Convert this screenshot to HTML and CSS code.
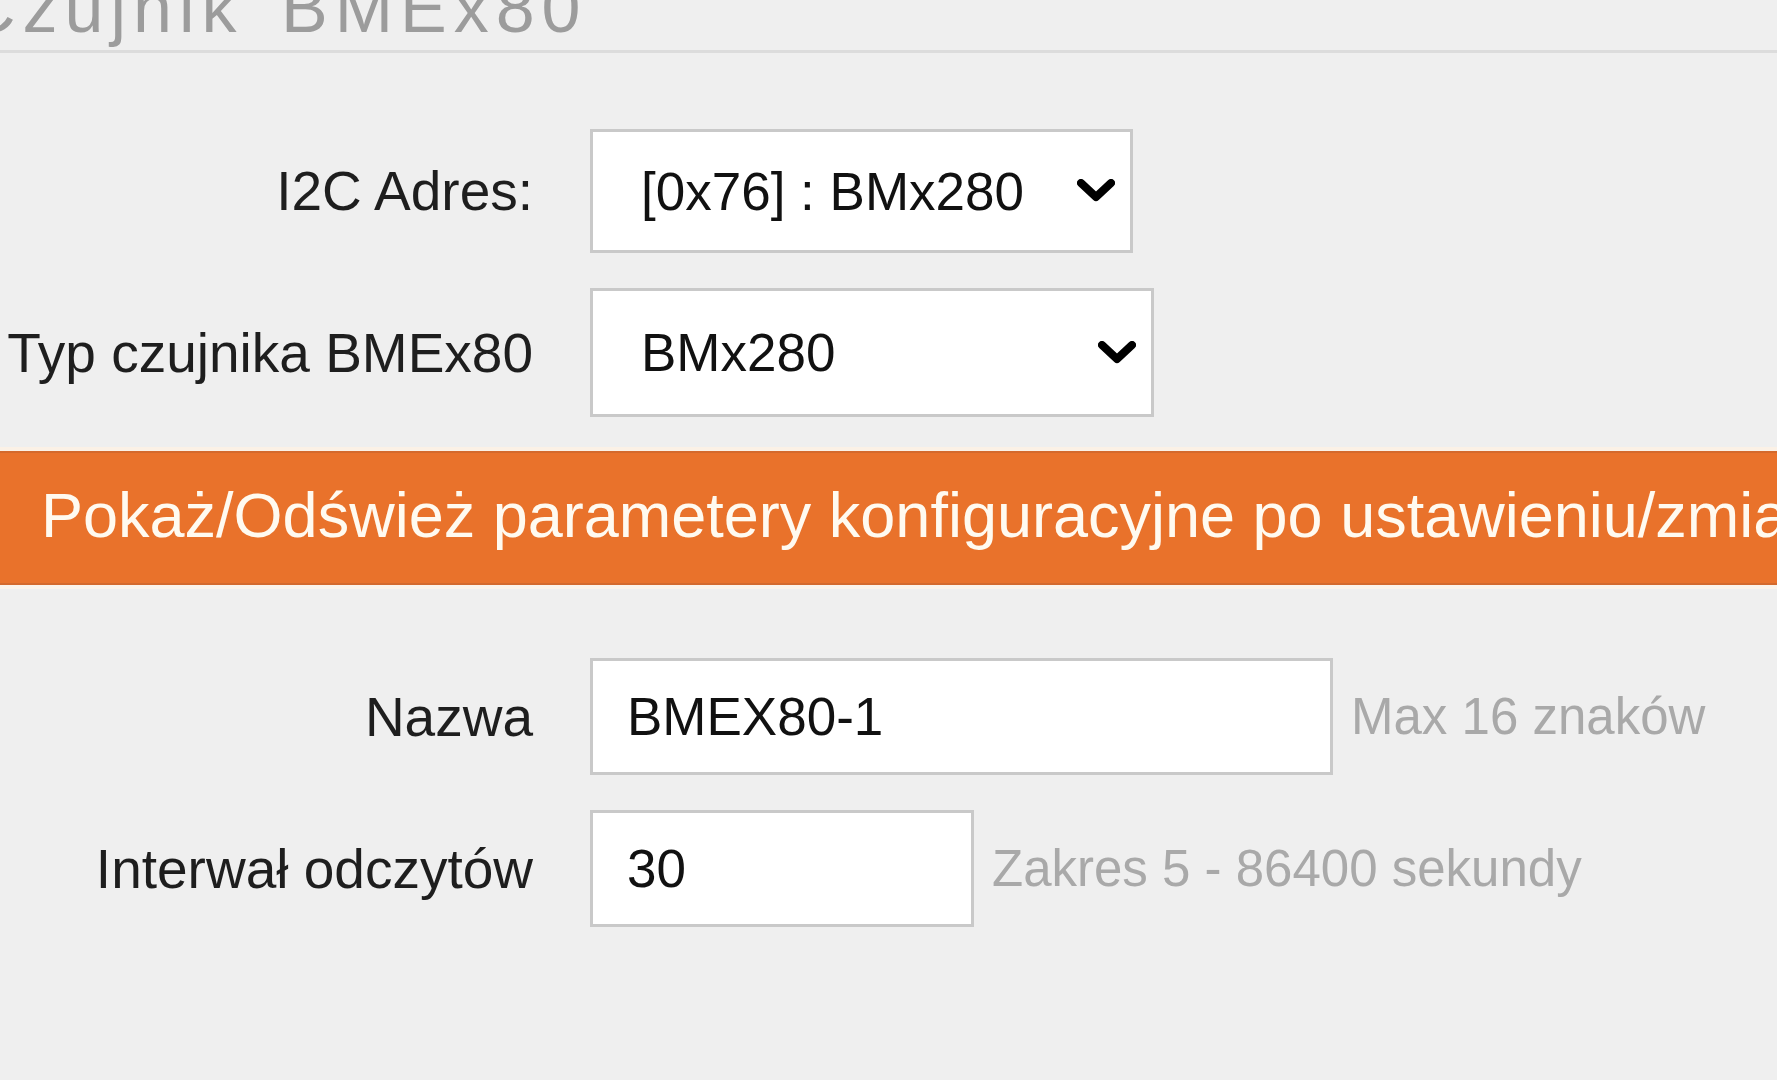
FILE: index.html
```html
<!DOCTYPE html>
<html lang="pl">
<head>
<meta charset="utf-8">
<title>Czujnik BMEx80</title>
<link rel="stylesheet" href="styles.css">
</head>
<body>
<div class="page">
  <h2 class="title"><span class="title-text">Czujnik BMEx80</span></h2>

  <div class="row row-addr">
    <label class="lbl">I2C Adres:</label>
    <div class="select select-addr">
      <span class="sel-value">[0x76] : BMx280</span>
      <svg class="chev" width="38" height="24" viewBox="0 0 38 24"><polyline points="4,4 19,18 34,4" fill="none" stroke="#000" stroke-width="8" stroke-linejoin="round" stroke-linecap="round"/></svg>
    </div>
  </div>

  <div class="row row-type">
    <label class="lbl">Typ czujnika BMEx80</label>
    <div class="select select-type">
      <span class="sel-value">BMx280</span>
      <svg class="chev" width="38" height="24" viewBox="0 0 38 24"><polyline points="4,4 19,18 34,4" fill="none" stroke="#000" stroke-width="8" stroke-linejoin="round" stroke-linecap="round"/></svg>
    </div>
  </div>

  <div class="banner">Pokaż/Odśwież parametery konfiguracyjne po ustawieniu/zmianie typu czujnika</div>

  <div class="row row-name">
    <label class="lbl">Nazwa</label>
    <div class="input input-name">BMEX80-1</div>
    <span class="hint">Max 16 znaków</span>
  </div>

  <div class="row row-int">
    <label class="lbl">Interwał odczytów</label>
    <div class="input input-int">30</div>
    <span class="hint">Zakres 5 - 86400 sekundy</span>
  </div>
</div>
</body>
</html>
```

FILE: styles.css
```css
html, body {
  margin: 0;
  padding: 0;
  background: #efefef;
  overflow: hidden;
  width: 1777px;
  height: 1080px;
}

.page {
  font-family: "Liberation Sans", Arial, sans-serif;
  color: #1e1e1e;
  width: 1777px;
}

.title {
  display: flow-root;
  margin: 0;
  height: 50px;
  border-bottom: 3px solid #dcdcdc;
  font-weight: normal;
  font-size: 70px;
  line-height: 70px;
  color: #9c9c9c;
  white-space: nowrap;
}

.title-text {
  display: block;
  margin-top: -27px;
  margin-left: -35px;
  letter-spacing: 7px;
  word-spacing: 11px;
}

.row {
  display: flex;
  align-items: center;
}

.lbl {
  flex: none;
  width: 533px;
  margin-right: 57px;
  text-align: right;
  font-size: 55px;
  color: #1e1e1e;
  white-space: nowrap;
}

.row-addr { margin-top: 76px; }
.row-type { margin-top: 35px; }
.row-name { margin-top: 73px; }
.row-int { margin-top: 35px; }

.select,
.input {
  box-sizing: border-box;
  background: #fff;
  border: 3px solid #c9c9c9;
  display: flex;
  align-items: center;
  font-size: 53px;
  color: #111;
  white-space: nowrap;
}

.select {
  padding: 0 15px 0 48px;
  justify-content: space-between;
}

.select-addr { width: 543px; height: 124px; }
.select-type { width: 564px; height: 129px; }

.chev {
  flex: none;
  display: block;
}

.input {
  padding-left: 34px;
  height: 117px;
}

.input-name { width: 743px; }
.input-int { width: 384px; }

.hint {
  margin-left: 18px;
  font-size: 51px;
  color: #a9a9a9;
  white-space: nowrap;
}

.banner {
  margin-top: 34px;
  box-sizing: border-box;
  height: 134px;
  background: #e9722b;
  border-top: 2px solid #d4692c;
  border-bottom: 2px solid #d4692c;
  box-shadow: 0 -4px 0 #fbf1e6, 0 4px 0 #fbf3ea;
  display: flex;
  align-items: center;
  padding: 0 0 6px 41px;
  font-size: 63px;
  color: #fffaf0;
  white-space: nowrap;
  overflow: hidden;
}
```
